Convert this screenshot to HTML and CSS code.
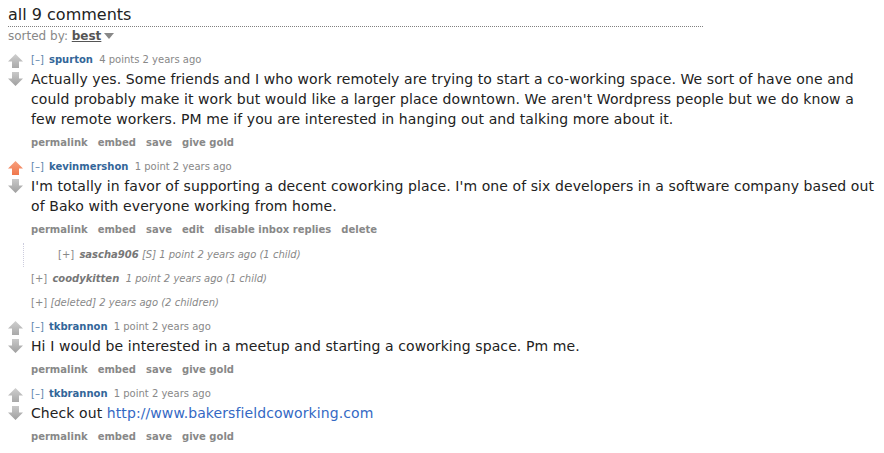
FILE: index.html
```html
<!DOCTYPE html>
<html>
<head>
<meta charset="utf-8">
<link rel="stylesheet" href="styles.css">
</head>
<body>
<div class="page">
  <div class="title">all 9 comments</div>
  <div class="sort">sorted by: <span class="sort-val">best</span><span class="caret"></span></div>

  <div class="comment">
    <div class="vote">
      <svg class="arrow" width="15" height="14" viewBox="0 0 15 14"><defs><linearGradient id="gu1" x1="0" y1="0" x2="0" y2="1"><stop offset="0" stop-color="#cfcfcf"/><stop offset="1" stop-color="#a9a9a9"/></linearGradient></defs><path d="M7.5 0 L15 7.5 L11 7.5 L11 14 L4 14 L4 7.5 L0 7.5 Z" fill="url(#gu1)"/></svg>
      <svg class="arrow" width="15" height="14" viewBox="0 0 15 14"><defs><linearGradient id="gd1" x1="0" y1="0" x2="0" y2="1"><stop offset="0" stop-color="#c9c9c9"/><stop offset="1" stop-color="#9f9f9f"/></linearGradient></defs><path d="M4 0 L11 0 L11 6.5 L15 6.5 L7.5 14 L0 6.5 L4 6.5 Z" fill="url(#gd1)"/></svg>
    </div>
    <div class="entry">
      <div class="tagline"><span class="expand">[–]</span> <span class="author">spurton</span> <span class="meta">4 points 2 years ago</span></div>
      <div class="body">Actually yes. Some friends and I who work remotely are trying to start a co-working space. We sort of have one and could probably make it work but would like a larger place downtown. We aren't Wordpress people but we do know a few remote workers. PM me if you are interested in hanging out and talking more about it.</div>
      <ul class="buttons"><li>permalink</li><li>embed</li><li>save</li><li>give gold</li></ul>
    </div>
  </div>

  <div class="comment has-child">
    <div class="vote">
      <svg class="arrow" width="15" height="14" viewBox="0 0 15 14"><defs><linearGradient id="gu2" x1="0" y1="0" x2="0" y2="1"><stop offset="0" stop-color="#f7a07e"/><stop offset="1" stop-color="#f0774c"/></linearGradient></defs><path d="M7.5 0 L15 7.5 L11 7.5 L11 14 L4 14 L4 7.5 L0 7.5 Z" fill="url(#gu2)"/></svg>
      <svg class="arrow" width="15" height="14" viewBox="0 0 15 14"><defs><linearGradient id="gd2" x1="0" y1="0" x2="0" y2="1"><stop offset="0" stop-color="#c9c9c9"/><stop offset="1" stop-color="#9f9f9f"/></linearGradient></defs><path d="M4 0 L11 0 L11 6.5 L15 6.5 L7.5 14 L0 6.5 L4 6.5 Z" fill="url(#gd2)"/></svg>
    </div>
    <div class="entry">
      <div class="tagline"><span class="expand">[–]</span> <span class="author">kevinmershon</span> <span class="meta">1 point 2 years ago</span></div>
      <div class="body">I'm totally in favor of supporting a decent coworking place. I'm one of six developers in a software company based out of Bako with everyone working from home.</div>
      <ul class="buttons"><li>permalink</li><li>embed</li><li>save</li><li>edit</li><li>disable inbox replies</li><li>delete</li></ul>
      <div class="child">
        <div class="collapsed"><span class="plus">[+]</span> <span class="c-author">sascha906</span> <span class="c-meta">[S] 1 point 2 years ago (1 child)</span></div>
      </div>
    </div>
  </div>

  <div class="collapsed top"><span class="plus">[+]</span> <span class="c-author">coodykitten</span> <span class="c-meta">&nbsp;1 point 2 years ago (1 child)</span></div>
  <div class="collapsed top"><span class="plus">[+]</span> <span class="c-meta">[deleted] 2 years ago (2 children)</span></div>

  <div class="comment">
    <div class="vote">
      <svg class="arrow" width="15" height="14" viewBox="0 0 15 14"><defs><linearGradient id="gu3" x1="0" y1="0" x2="0" y2="1"><stop offset="0" stop-color="#cfcfcf"/><stop offset="1" stop-color="#a9a9a9"/></linearGradient></defs><path d="M7.5 0 L15 7.5 L11 7.5 L11 14 L4 14 L4 7.5 L0 7.5 Z" fill="url(#gu3)"/></svg>
      <svg class="arrow" width="15" height="14" viewBox="0 0 15 14"><defs><linearGradient id="gd3" x1="0" y1="0" x2="0" y2="1"><stop offset="0" stop-color="#c9c9c9"/><stop offset="1" stop-color="#9f9f9f"/></linearGradient></defs><path d="M4 0 L11 0 L11 6.5 L15 6.5 L7.5 14 L0 6.5 L4 6.5 Z" fill="url(#gd3)"/></svg>
    </div>
    <div class="entry">
      <div class="tagline"><span class="expand">[–]</span> <span class="author">tkbrannon</span> <span class="meta">1 point 2 years ago</span></div>
      <div class="body">Hi I would be interested in a meetup and starting a coworking space. Pm me.</div>
      <ul class="buttons"><li>permalink</li><li>embed</li><li>save</li><li>give gold</li></ul>
    </div>
  </div>

  <div class="comment">
    <div class="vote">
      <svg class="arrow" width="15" height="14" viewBox="0 0 15 14"><defs><linearGradient id="gu4" x1="0" y1="0" x2="0" y2="1"><stop offset="0" stop-color="#cfcfcf"/><stop offset="1" stop-color="#a9a9a9"/></linearGradient></defs><path d="M7.5 0 L15 7.5 L11 7.5 L11 14 L4 14 L4 7.5 L0 7.5 Z" fill="url(#gu4)"/></svg>
      <svg class="arrow" width="15" height="14" viewBox="0 0 15 14"><defs><linearGradient id="gd4" x1="0" y1="0" x2="0" y2="1"><stop offset="0" stop-color="#c9c9c9"/><stop offset="1" stop-color="#9f9f9f"/></linearGradient></defs><path d="M4 0 L11 0 L11 6.5 L15 6.5 L7.5 14 L0 6.5 L4 6.5 Z" fill="url(#gd4)"/></svg>
    </div>
    <div class="entry">
      <div class="tagline"><span class="expand">[–]</span> <span class="author">tkbrannon</span> <span class="meta">1 point 2 years ago</span></div>
      <div class="body">Check out <a class="link" href="#">http://www.bakersfieldcoworking.com</a></div>
      <ul class="buttons"><li>permalink</li><li>embed</li><li>save</li><li>give gold</li></ul>
    </div>
  </div>
</div>
</body>
</html>
```

FILE: styles.css
```css
html, body {
  margin: 0;
  padding: 0;
  background: #fff;
}
body {
  font-family: "DejaVu Sans", Verdana, sans-serif;
  color: #222;
}
.page {
  padding: 4px 0 0 8px;
}
.title {
  font-size: 16px;
  line-height: 22px;
  width: 695px;
  border-bottom: 1px dotted #808080;
  color: #222;
}
.sort {
  font-size: 12px;
  line-height: 16px;
  color: #888;
  margin-top: 1px;
  margin-bottom: 8px;
}
.sort-val {
  font-weight: bold;
  color: #555;
  text-decoration: underline;
}
.caret {
  display: inline-block;
  width: 0;
  height: 0;
  border-left: 5px solid transparent;
  border-right: 5px solid transparent;
  border-top: 6px solid #888;
  margin-left: 3px;
  vertical-align: 1px;
}
.comment {
  display: flex;
  margin-bottom: 8px;
}
.comment.has-child {
  margin-bottom: 4px;
}
.vote {
  width: 23px;
  flex: none;
  display: flex;
  flex-direction: column;
  gap: 4px;
  padding-top: 2px;
}
.arrow {
  display: block;
}
.entry {
  flex: 1;
  min-width: 0;
  padding-right: 6px;
}
.tagline {
  font-size: 10px;
  line-height: 16px;
  color: #888;
}
.expand {
  color: #369;
  opacity: 0.8;
}
.author {
  color: #369;
  font-weight: bold;
  margin: 0 3px 0 2px;
}
.body {
  font-size: 14px;
  line-height: 20px;
  letter-spacing: 0.09px;
  margin-top: 1px;
  color: #222;
}
.link {
  color: #3469c4;
  text-decoration: none;
}
.buttons {
  list-style: none;
  margin: 6px 0 0 0;
  padding: 0;
  display: flex;
  gap: 10px;
  font-size: 10px;
  line-height: 16px;
  font-weight: bold;
  color: #888;
}
.child {
  margin-left: -8px;
  margin-top: 5px;
  border-left: 1px dotted #ccd;
  padding: 4px 0 4px 34px;
}
.collapsed {
  font-size: 10px;
  line-height: 16px;
  color: #888;
}
.collapsed.top {
  padding-left: 23px;
  margin-bottom: 8px;
}
.plus {
  color: #888;
}
.c-author {
  font-weight: bold;
  font-style: italic;
  color: #777;
  margin-left: 2px;
}
.c-meta {
  font-style: italic;
  color: #888;
}
```
